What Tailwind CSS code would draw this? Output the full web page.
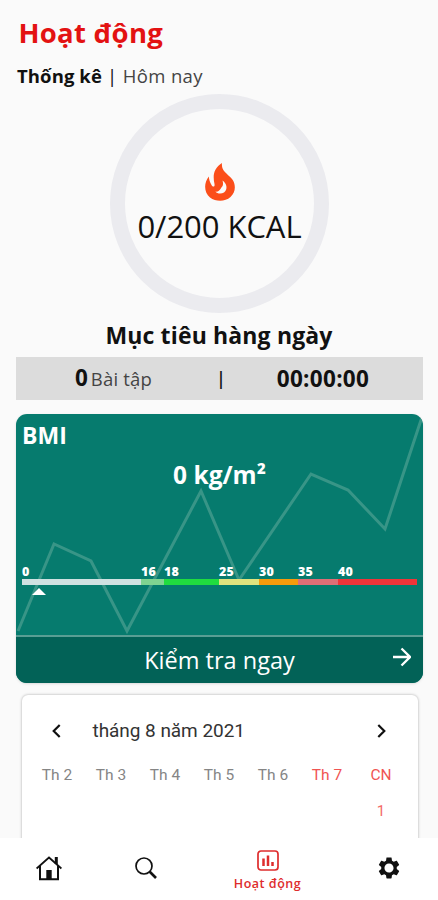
<!DOCTYPE html>
<html lang="vi">
<head>
<meta charset="utf-8">
<meta name="viewport" content="width=device-width, initial-scale=1">
<title>Hoạt động</title>
<script src="https://cdn.jsdelivr.net/npm/@tailwindcss/browser@4"></script>
</head>
<body class="bg-[#fafafa]">
<div class="flex h-[900px] w-[438px] flex-col overflow-hidden bg-[#fafafa] font-['Open_Sans',sans-serif] text-[#111]">
  <main class="flex h-[838px] shrink-0 flex-col overflow-hidden">
    <h1 class="h-16 shrink-0 pl-[18.500px] text-[27.500px] leading-[65px] font-bold tracking-[0.25px] text-[#e31212]">Hoạt động</h1>
    <div class="h-[30px] shrink-0 pl-[17px] text-[18.5px] leading-6 tracking-[0.35px] whitespace-pre"><span class="font-bold tracking-[0.1px]">Thống kê</span> | <span class="text-[#444]">Hôm nay</span></div>

    <section class="ml-[110px] flex h-[219px] w-[219px] shrink-0 flex-col items-center rounded-full border-[15px] border-[#ebebef] pt-[54px]">
      <svg class="h-[38px] w-[30px] shrink-0" viewBox="0 0 30 38" fill="none">
        <path d="M17 0C9 5 7.500 12 9.500 21C10 24 8 24.500 6.500 22C5 19.500 4 16.500 3.800 13.500C-1.500 20 -1 30 5 34.500C11 39 20 39 25.500 34C31 29 31 21 27 16C22 10 16 8 17 0Z" fill="#fb4e1a"/>
        <path d="M17.500 17.500C19 22.500 17 23.500 15.800 25.500C14.500 28 12.500 29 10.500 28.500C12 30.700 16 31.300 19 29.500C23 26.500 22 20.500 17.500 17.500Z" fill="#fafafa"/>
      </svg>
      <div class="text-[31px] leading-[50px] font-normal tracking-[-0.05px] whitespace-nowrap">0/200 KCAL</div>
    </section>

    <h2 class="h-[43.5px] shrink-0 text-center text-[23px] leading-[44px] font-bold tracking-[0.15px]">Mục tiêu hàng ngày</h2>
    <section class="mx-4 flex h-[43px] w-[407px] shrink-0 items-center bg-[#dcdcdc]">
      <div class="flex w-[195px] items-baseline justify-center gap-[3px] leading-[43px]"><b class="text-[22.500px] font-bold">0</b><span class="text-[18.500px] font-normal tracking-[0.2px] text-[#444]">Bài tập</span></div>
      <div class="w-5 text-center text-[18px] font-semibold">|</div>
      <div class="w-[184px] text-center text-[22.500px] leading-[41px] font-bold tracking-[0.3px]">00:00:00</div>
    </section>

    <section class="relative mt-3.5 ml-4 flex h-[269.5px] w-[407px] shrink-0 flex-col overflow-hidden rounded-[11px] bg-[#067b6e] text-white shadow-sm">
      <svg class="absolute inset-0 h-[221px] w-[407px]" viewBox="0 0 407 221" fill="none" stroke="#389587" stroke-width="3">
        <path d="M2 217L38 130L75 147L111 217L185 77L223 166L295 60L332 76L369 115L406 3"/>
      </svg>
      <div class="relative flex h-[221px] shrink-0 flex-col">
        <h3 class="h-[43px] pl-1.5 text-[23px] leading-[43px] font-bold">BMI</h3>
        <div class="h-9 text-center text-[24.500px] leading-9 font-bold">0 kg/m²</div>
        <div class="mt-[69px] ml-1.5 grid h-[17px] w-[395px] grid-cols-[119px_23px_55px_40px_39px_40px_79px] text-[12.500px] leading-[19px] font-extrabold tracking-[0.3px]">
          <span>0</span><span>16</span><span>18</span><span>25</span><span>30</span><span>35</span><span>40</span>
        </div>
        <div class="ml-1.5 grid h-[6.500px] w-[395px] shrink-0 grid-cols-[119px_23px_55px_40px_39px_40px_79px]">
          <i class="bg-[#cfe1e1]"></i><i class="bg-[#7fd391]"></i><i class="bg-[#20dc3f]"></i><i class="bg-[#dfe37e]"></i><i class="bg-[#f59b0b]"></i><i class="bg-[#df6e76]"></i><i class="bg-[#ef3439]"></i>
        </div>
        <svg class="mt-[2.500px] ml-4 h-[7px] w-3.5" viewBox="0 0 14 7"><path d="M0 7L7 0L14 7Z" fill="#fff"/></svg>
      </div>
      <div class="relative flex h-[48.500px] items-center justify-center border-t-2 border-[#599e94] bg-[#026257] text-[23.500px]">
        <span class="leading-[46px]">Kiểm tra ngay</span>
        <svg class="absolute top-2.5 right-3 h-5 w-[18px]" viewBox="0 0 18 20" fill="none" stroke="#fff" stroke-width="2.300"><path d="M0 10H16.500M8.500 1.500L17 10L8.500 18.500"/></svg>
      </div>
    </section>

    <section class="mt-[11.500px] ml-[21.500px] h-[220px] w-[396px] shrink-0 rounded-[6px] bg-white font-[Roboto,sans-serif] shadow-[0_0_3px_rgba(0,0,0,0.32)]">
      <div class="flex h-[72px] items-center">
        <svg class="ml-[30.500px] h-3.5 w-[9px]" viewBox="0 0 9 14" fill="none" stroke="#111" stroke-width="2.200"><path d="M7.700 1L1.700 7L7.700 13"/></svg>
        <span class="ml-[31.500px] pt-0.5 text-[19px] tracking-[-0.05px] text-[#333]">tháng 8 năm 2021</span>
        <svg class="mr-[31.500px] ml-auto h-3.5 w-[9px]" viewBox="0 0 9 14" fill="none" stroke="#111" stroke-width="2.200"><path d="M1.300 1L7.300 7L1.300 13"/></svg>
      </div>
      <div class="-mt-0.5 ml-[8.500px] grid w-[378px] grid-cols-7 text-center text-[15.500px] leading-5 text-[#858585]">
        <span>Th 2</span><span>Th 3</span><span>Th 4</span><span>Th 5</span><span>Th 6</span><span class="text-[#f05452]">Th 7</span><span class="text-[#f05452]">CN</span>
        <span class="col-start-7 mt-4 text-[15px] text-[#f36a66]">1</span>
      </div>
    </section>
  </main>

  <nav class="relative flex h-[62px] shrink-0 bg-white">
    <div class="flex w-[97px] shrink-0 justify-center pt-[18px]">
      <svg class="h-[25px] w-[26px]" viewBox="0 0 26 25" fill="none" stroke="#111" stroke-width="1.700"><path d="M0.600 12.500L13 1.500L25.400 12.500"/><path d="M4 10V23.200H22V10" stroke-width="2"/><path d="M20.300 1V8" stroke-width="3"/><path d="M10.300 14H15.700V23H10.300Z" fill="#111" stroke="none"/></svg>
    </div>
    <div class="flex w-[98px] shrink-0 justify-center pt-[19px]">
      <svg class="h-[22px] w-[22px]" viewBox="0 0 22 22" fill="none" stroke="#111"><circle cx="9" cy="9" r="8" stroke-width="1.700"/><path d="M14.500 14.500L21 21" stroke-width="2.700"/></svg>
    </div>
    <div class="flex w-[145px] shrink-0 flex-col items-center pt-3 text-[#de2c2c]">
      <svg class="h-[21px] w-[22px]" viewBox="0 0 22 21" fill="none" stroke="currentColor"><rect x="1" y="1" width="20" height="19" rx="3" stroke-width="1.700"/><path d="M6.500 8.500V16M11 5.500V16M15.500 12V16" stroke-width="2.500"/></svg>
      <span class="mt-1 text-[12.500px] leading-[18px] font-semibold tracking-[0.5px]">Hoạt động</span>
    </div>
    <div class="flex w-[98px] shrink-0 justify-center pt-[17px]">
      <svg class="h-[26px] w-[26px]" viewBox="0 0 24 24" fill="#111"><path d="M19.140 12.940c.04-.3.060-.61.060-.94 0-.32-.02-.64-.07-.94l2.030-1.580c.18-.14.230-.41.120-.61l-1.920-3.320c-.12-.22-.37-.29-.59-.22l-2.390.96c-.5-.38-1.030-.7-1.620-.94L14.400 2.810c-.04-.24-.24-.41-.48-.41h-3.840c-.24 0-.43.170-.47.410L9.250 5.350c-.59.240-1.130.57-1.620.94l-2.390-.96c-.22-.08-.47 0-.59.220L2.740 8.870c-.12.210-.08.470.120.610l2.030 1.580c-.05.300-.09.630-.09.940s.02.640.070.940l-2.030 1.580c-.18.140-.23.410-.12.610l1.920 3.320c.12.220.37.290.59.220l2.390-.96c.5.380 1.030.7 1.620.94l.36 2.540c.05.240.24.410.48.410h3.840c.24 0 .44-.17.470-.41l.36-2.540c.59-.24 1.130-.56 1.620-.94l2.390.96c.22.080.47 0 .59-.22l1.920-3.320c.12-.22.070-.47-.12-.61l-2.010-1.580zM12 16.200c-2.310 0-4.200-1.890-4.200-4.200S9.690 7.800 12 7.800s4.200 1.890 4.200 4.200-1.890 4.200-4.200 4.200z"/></svg>
    </div>
  </nav>
</div>
</body>
</html>
